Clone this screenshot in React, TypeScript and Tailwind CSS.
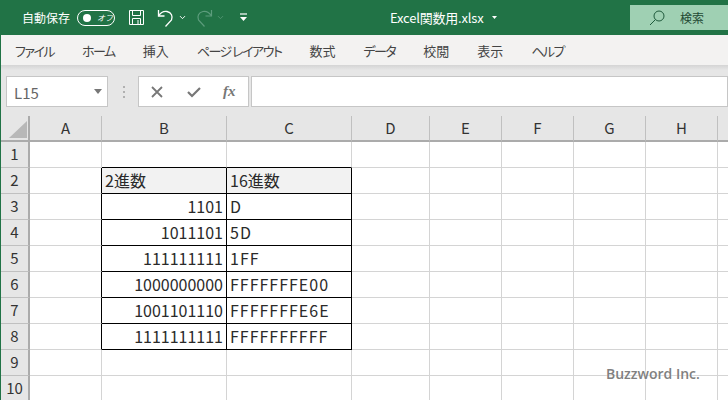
import { ChevronDown } from 'lucide-react';

const JP = "font-['Noto_Sans_CJK_JP','Noto_Sans',sans-serif]";

// kana: Meiryo-UI-artig schmale Kana
const TABS = [
  { label: 'ファイル', kana: true },
  { label: 'ホーム', kana: true },
  { label: '挿入', kana: false },
  { label: 'ページ レイアウト', kana: true },
  { label: '数式', kana: false },
  { label: 'データ', kana: true },
  { label: '校閲', kana: false },
  { label: '表示', kana: false },
  { label: 'ヘルプ', kana: true },
];
const COLS = ['A', 'B', 'C', 'D', 'E', 'F', 'G', 'H', ''];
const ROWS = [1, 2, 3, 4, 5, 6, 7, 8, 9, 10];

// row -> [B, C]
const DATA: Record<number, [string, string]> = {
  2: ['2進数', '16進数'],
  3: ['1101', 'D'],
  4: ['1011101', '5D'],
  5: ['111111111', '1FF'],
  6: ['1000000000', 'FFFFFFFE00'],
  7: ['1001101110', 'FFFFFFFE6E'],
  8: ['1111111111', 'FFFFFFFFFF'],
};

function Cell({ row, col }: { row: number; col: number }) {
  const inTable = row >= 2 && row <= 8;
  const isDataCol = col === 1 || col === 2;
  const rightBlack = inTable && col <= 2;
  const bottomBlack = row >= 1 && row <= 8 && isDataCol;
  const text = inTable && isDataCol ? DATA[row][col - 1] : '';
  const numeric = col === 1 && row > 2;
  return (
    <div
      className={[
        'flex items-center overflow-hidden whitespace-nowrap border-r border-b px-[3px] pb-[2px] text-[16px] text-[#2a2a2a]',
        rightBlack ? 'border-r-black' : 'border-r-[#d4d4d4]',
        bottomBlack ? 'border-b-black' : 'border-b-[#d4d4d4]',
        numeric ? 'justify-end' : 'justify-start',
        col === 2 && row > 2 ? 'tracking-[1px]' : '',
        row === 2 && isDataCol ? 'bg-[#f2f2f2]' : 'bg-white',
      ].join(' ')}
    >
      {text}
    </div>
  );
}

export default function App() {
  return (
    <div className={`relative h-[400px] w-[728px] overflow-hidden border-l border-[#217346] bg-white ${JP}`}>
      {/* Titelleiste */}
      <div className="flex h-[35px] items-center bg-[#217346] text-white">
        <span className="ml-[21px] text-[12px] leading-none">自動保存</span>
        <div className="ml-[7px] flex h-[16px] w-[38px] items-center rounded-full border border-white pl-[5px]">
          <span className="h-[8px] w-[8px] rounded-full bg-white" />
          <span className="ml-[6px] text-[8px] italic leading-none">オフ</span>
        </div>
        <svg className="ml-[13px]" width="17" height="17" viewBox="0 0 17 17" fill="none" stroke="#fff" strokeWidth="1">
          <path d="M1.500 1.500h14v14h-14z" />
          <path d="M4.500 1.500v5h8v-5M4.500 15.500v-6h8v6M10 11v4.500" />
        </svg>
        <svg className="ml-[12px]" width="18" height="20" viewBox="0 0 18 20" fill="none" stroke="#fff" strokeWidth="1.3">
          <path d="M1.500 2v6h6" />
          <path d="M1.500 8C4 4 7 3 10 3.500c4.500 1 6 5 4.500 8.500L8.500 18.500" />
        </svg>
        <ChevronDown className="ml-[3px] text-white" size={9} strokeWidth={2.500} />
        <svg className="ml-[8px]" width="18" height="20" viewBox="0 0 18 20" fill="none" stroke="#5c9c7c" strokeWidth="1.2">
          <path d="M16.500 2v6h-6" />
          <path d="M16.500 8C14 4 11 3 8 3.500c-4.500 1-6 5-4.500 8.500l6 6.500" />
        </svg>
        <ChevronDown className="ml-[3px] text-[#5c9c7c]" size={9} strokeWidth={2} />
        <svg className="ml-[14px]" width="9" height="9" viewBox="0 0 9 9">
          <path d="M1 1h7" stroke="#fff" strokeWidth="1.2" />
          <path d="M1 4h7L4.500 8z" fill="#fff" />
        </svg>
        <span className="ml-[142px] w-[93px] whitespace-nowrap text-[13px] leading-none tracking-[-0.2px]">Excel関数用.xlsx</span>
        <svg className="ml-[9px]" width="5" height="3" viewBox="0 0 7 4">
          <path d="M0 0h7L3.500 4z" fill="#fff" />
        </svg>
        <div className="ml-[133px] mb-[5px] mt-[5px] flex h-[25px] flex-1 items-center bg-[#9fd0b3] pl-[19px] text-[#1f4a33]">
          <svg width="16" height="16" viewBox="0 0 16 16" fill="none" stroke="#1f5a3c" strokeWidth="1">
            <circle cx="10" cy="6" r="5" />
            <path d="M6.500 9.500L1 15" />
          </svg>
          <span className="ml-[15px] text-[12px] leading-none">検索</span>
        </div>
      </div>

      {/* Ribbon-Tabs */}
      <div className="flex h-[30px] items-center gap-[28px] bg-[#f3f2f1] pl-[14px] text-[13px] text-[#444] [font-feature-settings:'palt']">
        {TABS.map(t => (
          <span key={t.label} className={t.kana ? 'whitespace-nowrap leading-none tracking-[-1.5px]' : 'whitespace-nowrap leading-none'}>
            {t.label}
          </span>
        ))}
      </div>
      <div className="h-[5px] bg-gradient-to-b from-[#d4d4d4] to-[#e6e6e6]" />

      {/* Bearbeitungsleiste */}
      <div className="flex h-[46px] items-start bg-[#e6e6e6] pl-[5px] pt-[6px]">
        <div className="flex h-[31px] w-[102px] items-center justify-between border border-[#c6c6c6] bg-white pl-[7px] pr-[5px] text-[15px] text-[#666]">
          <span className="pt-[3px]">L15</span>
          <svg width="8" height="5" viewBox="0 0 8 5">
            <path d="M0 0h8L4 5z" fill="#777" />
          </svg>
        </div>
        <div className="ml-[15px] mt-[10px] flex flex-col gap-[3px]">
          <span className="h-[2px] w-[2px] bg-[#b0b0b0]" />
          <span className="h-[2px] w-[2px] bg-[#b0b0b0]" />
          <span className="h-[2px] w-[2px] bg-[#b0b0b0]" />
        </div>
        <div className="ml-[13px] flex h-[31px] w-[111px] items-center border border-[#c6c6c6] bg-white pl-[12px]">
          <svg width="12" height="12" viewBox="0 0 12 12" stroke="#777" strokeWidth="1.800" fill="none">
            <path d="M1 1l10 10M11 1L1 11" />
          </svg>
          <svg className="ml-[24px]" width="14" height="12" viewBox="0 0 14 12" stroke="#777" strokeWidth="2.200" fill="none">
            <path d="M1 6l4 4 8-8" />
          </svg>
          <span className="ml-[22px] font-['Liberation_Serif',serif] text-[15px] font-bold italic leading-none text-[#777]">fx</span>
        </div>
        <div className="ml-[2px] h-[31px] flex-1 border border-[#c6c6c6] bg-white" />
      </div>

      {/* Tabelle */}
      <div className="grid grid-cols-[29px_72px_125px_125px_78px_72px_72px_72px_72px_20px] grid-rows-[26px_repeat(10,26px)]">
        <div className="relative border-r-2 border-b-2 border-[#ababab] bg-[#e6e6e6]">
          <svg className="absolute left-[8px] top-[5px]" width="18" height="17" viewBox="0 0 18 17">
            <path d="M18 0v17H0z" fill="#b8b8b8" />
          </svg>
        </div>
        {COLS.map((c, i) => (
          <div
            key={i}
            className="flex items-center justify-center border-r border-b-2 border-r-[#c0c0c0] border-b-[#ababab] bg-[#e6e6e6] text-[15px] text-[#333]"
          >
            {c}
          </div>
        ))}
        {ROWS.map(r => (
          <div key={r} className="contents">
            <div className="flex items-center justify-center border-r-2 border-b border-r-[#ababab] border-b-[#c0c0c0] bg-[#e6e6e6] text-[15px] text-[#333]">
              {r}
            </div>
            {COLS.map((_, i) => (
              <Cell key={i} row={r} col={i} />
            ))}
          </div>
        ))}
      </div>

      {/* Wasserzeichen */}
      <span className="absolute left-[605px] top-[364px] font-['Open_Sans',sans-serif] text-[14px] font-semibold leading-[20px] text-[#808080] [text-shadow:0_0_3px_#fff]">
        Buzzword Inc.
      </span>
    </div>
  );
}
